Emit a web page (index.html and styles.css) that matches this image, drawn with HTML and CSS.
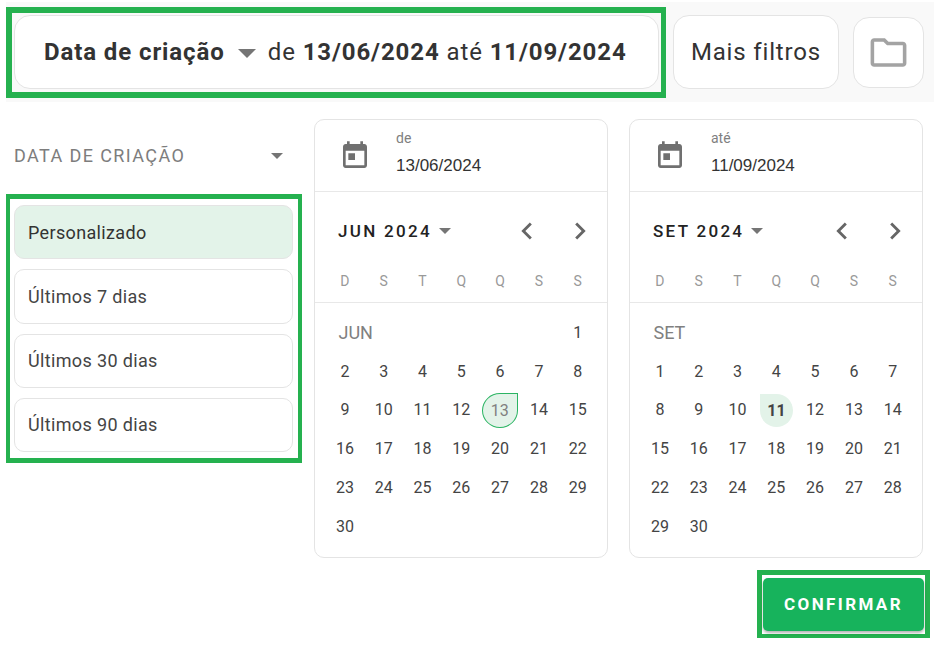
FILE: index.html
```html
<!DOCTYPE html>
<html lang="pt-BR">
<head>
    <meta charset="UTF-8">
    <title>Data de criação</title>
    <link rel="stylesheet" href="styles.css">
</head>
<body>
    <div class="filter-bar">
        <div class="mark mark-summary">
            <div class="summary">
                <strong>Data de criação</strong>
                <span class="caret caret-lg"></span>
                <span class="summary-range">de <strong>13/06/2024</strong> até <strong>11/09/2024</strong></span>
            </div>
        </div>
        <div class="more-filters">Mais filtros</div>
        <div class="folder-button">
            <svg viewBox="0 0 24 24" width="43" height="43"><path d="M9.17 6l2 2H20v10H4V6h5.17M10 4H4c-1.1 0-1.99.9-1.99 2L2 18c0 1.1.9 2 2 2h16c1.1 0 2-.9 2-2V8c0-1.1-.9-2-2-2h-8l-2-2z"/></svg>
        </div>
    </div>

    <div class="content">
        <div class="sidebar">
            <div class="field-select">
                <span>DATA DE CRIAÇÃO</span>
                <span class="caret caret-sm"></span>
            </div>
            <div class="mark mark-presets">
                <div class="preset preset-active">Personalizado</div>
                <div class="preset">Últimos 7 dias</div>
                <div class="preset">Últimos 30 dias</div>
                <div class="preset">Últimos 90 dias</div>
            </div>
        </div>

        <div class="calendar">
            <div class="cal-head">
                <svg class="cal-icon" viewBox="0 0 24 24" width="32" height="32"><path d="M19 3h-1V1h-2v2H8V1H6v2H5c-1.11 0-1.99.9-1.99 2L3 19c0 1.1.89 2 2 2h14c1.1 0 2-.9 2-2V5c0-1.1-.9-2-2-2zm0 16H5V8h14v11zM7 10h5v5H7z"/></svg>
                <div class="cal-text">
                    <div class="cal-label">de</div>
                    <div class="cal-date">13/06/2024</div>
                </div>
            </div>
            <div class="cal-nav">
                <span class="cal-month">JUN 2024</span>
                <span class="caret caret-sm"></span>
                <svg class="chevron chevron-prev" viewBox="0 0 24 24" width="34" height="34"><path d="M15.41 7.41 14 6l-6 6 6 6 1.41-1.41L10.83 12z"/></svg>
                <svg class="chevron" viewBox="0 0 24 24" width="34" height="34"><path d="M8.59 16.59 10 18l6-6-6-6-1.41 1.41L13.17 12z"/></svg>
            </div>
            <div class="weekdays">
                <span>D</span><span>S</span><span>T</span><span>Q</span><span>Q</span><span>S</span><span>S</span>
            </div>
            <div class="days">
                <span class="month-label month-label-short">JUN</span><span>1</span>
                <span>2</span><span>3</span><span>4</span><span>5</span><span>6</span><span>7</span><span>8</span>
                <span>9</span><span>10</span><span>11</span><span>12</span><span class="day-start">13</span><span>14</span><span>15</span>
                <span>16</span><span>17</span><span>18</span><span>19</span><span>20</span><span>21</span><span>22</span>
                <span>23</span><span>24</span><span>25</span><span>26</span><span>27</span><span>28</span><span>29</span>
                <span>30</span>
            </div>
        </div>

        <div class="calendar">
            <div class="cal-head">
                <svg class="cal-icon" viewBox="0 0 24 24" width="32" height="32"><path d="M19 3h-1V1h-2v2H8V1H6v2H5c-1.11 0-1.99.9-1.99 2L3 19c0 1.1.89 2 2 2h14c1.1 0 2-.9 2-2V5c0-1.1-.9-2-2-2zm0 16H5V8h14v11zM7 10h5v5H7z"/></svg>
                <div class="cal-text">
                    <div class="cal-label">até</div>
                    <div class="cal-date">11/09/2024</div>
                </div>
            </div>
            <div class="cal-nav">
                <span class="cal-month">SET 2024</span>
                <span class="caret caret-sm"></span>
                <svg class="chevron chevron-prev" viewBox="0 0 24 24" width="34" height="34"><path d="M15.41 7.41 14 6l-6 6 6 6 1.41-1.41L10.83 12z"/></svg>
                <svg class="chevron" viewBox="0 0 24 24" width="34" height="34"><path d="M8.59 16.59 10 18l6-6-6-6-1.41 1.41L13.17 12z"/></svg>
            </div>
            <div class="weekdays">
                <span>D</span><span>S</span><span>T</span><span>Q</span><span>Q</span><span>S</span><span>S</span>
            </div>
            <div class="days">
                <span class="month-label">SET</span>
                <span>1</span><span>2</span><span>3</span><span>4</span><span>5</span><span>6</span><span>7</span>
                <span>8</span><span>9</span><span>10</span><span class="day-end">11</span><span>12</span><span>13</span><span>14</span>
                <span>15</span><span>16</span><span>17</span><span>18</span><span>19</span><span>20</span><span>21</span>
                <span>22</span><span>23</span><span>24</span><span>25</span><span>26</span><span>27</span><span>28</span>
                <span>29</span><span>30</span>
            </div>
        </div>
    </div>

    <div class="footer">
        <div class="mark mark-confirm">
            <button class="confirm-button">CONFIRMAR</button>
        </div>
    </div>
</body>
</html>
```

FILE: styles.css
```css
* {
    box-sizing: border-box;
}

body {
    margin: 0;
    background: #fff;
    color: #333;
    font-family: Roboto, "Liberation Sans", sans-serif;
}

/* green annotation frames */
.mark {
    border: 6px solid #25b14f;
}

.caret {
    display: inline-block;
    flex: none;
    width: 0;
    height: 0;
    border-style: solid;
    border-color: #757575 transparent transparent transparent;
}

.caret-lg {
    border-width: 9px 9px 0 9px;
    margin: 3px 12px 0 13px;
}

.caret-sm {
    border-width: 6.5px 6.5px 0 6.5px;
}

/* top bar */
.filter-bar {
    display: flex;
    width: 928px;
    height: 100px;
    margin: 2px 0 0 6px;
    background: #f9f9f9;
}

.mark-summary {
    width: 660px;
    height: 91px;
    margin-top: 5px;
    padding: 2px 2px 3px 2px;
    border-right-width: 5px;
}

.summary {
    display: flex;
    align-items: center;
    height: 100%;
    padding-left: 29px;
    background: #fff;
    border: 1px solid #e4e4e4;
    border-radius: 16px;
    font-size: 24px;
    letter-spacing: 0.9px;
}

.summary-range {
    white-space: pre;
}

.summary strong {
    font-weight: 700;
}

.more-filters {
    display: flex;
    align-items: center;
    justify-content: center;
    width: 166px;
    height: 74px;
    margin: 13px 0 0 7px;
    background: #fff;
    border: 1px solid #e4e4e4;
    border-radius: 16px;
    font-size: 24px;
    letter-spacing: 0.85px;
}

.folder-button {
    display: flex;
    align-items: center;
    justify-content: center;
    width: 71px;
    height: 71px;
    margin: 15px 0 0 14px;
    background: #fff;
    border: 1px solid #e4e4e4;
    border-radius: 16px;
}

.folder-button svg {
    fill: #a3a3a3;
}

/* main area */
.content {
    display: flex;
    gap: 21px;
    height: 455px;
    margin: 17px 0 0 6px;
}

.sidebar {
    flex: none;
    width: 296px;
    margin-right: -9px;
}

.field-select {
    display: flex;
    align-items: center;
    justify-content: space-between;
    height: 75px;
    padding: 0 19px 2px 8px;
    color: #7d7d7d;
    font-size: 18px;
    letter-spacing: 1.4px;
}

.mark-presets {
    display: flex;
    flex-direction: column;
    gap: 10px;
    width: 296px;
    height: 269px;
    padding: 6px 5px 6px 4px;
    border-width: 5px 4px;
}

.preset {
    display: flex;
    align-items: center;
    flex: 1;
    padding-left: 13px;
    background: #fff;
    border: 1px solid #e4e4e4;
    border-radius: 10px;
    color: #444;
    font-size: 18px;
    letter-spacing: 0.35px;
}

.preset-active {
    background: #e3f3e9;
    color: #333;
}

/* calendars */
.calendar {
    flex: none;
    width: 294px;
    height: 439px;
    background: #fff;
    border: 1px solid #e4e4e4;
    border-radius: 10px;
}

.cal-head {
    display: flex;
    align-items: center;
    height: 72px;
    padding-left: 24px;
    border-bottom: 1px solid #e8e8e8;
}

.cal-icon {
    fill: #707070;
    margin-right: 25px;
}

.cal-text {
    margin-bottom: 5px;
}

.cal-label {
    color: #808080;
    font-size: 14px;
}

.cal-date {
    margin-top: 10px;
    font-family: "Liberation Sans", sans-serif;
    font-size: 17px;
}

.cal-nav {
    display: flex;
    align-items: center;
    height: 77px;
    padding: 0 10px 0 23px;
}

.cal-month {
    margin-right: 7px;
    color: #222;
    font-size: 17px;
    font-weight: 500;
    letter-spacing: 2.3px;
}

.chevron {
    fill: #666;
}

.chevron-prev {
    margin-left: auto;
    margin-right: 19px;
}

.weekdays,
.days {
    display: grid;
    grid-template-columns: repeat(7, 38.8px);
    padding-left: 10.5px;
    text-align: center;
}

.weekdays {
    height: 34px;
    border-bottom: 1px solid #e8e8e8;
    color: #999;
    font-size: 14px;
    line-height: 24px;
}

.days {
    grid-auto-rows: 38.8px;
    padding-top: 10px;
    color: #444;
    font-size: 16px;
}

.days span {
    display: flex;
    align-items: center;
    justify-content: center;
}

.days .month-label {
    grid-column: span 7;
    justify-content: flex-start;
    padding-left: 13px;
    color: #808080;
    font-size: 18px;
}

.days .month-label-short {
    grid-column: span 6;
}

.days .day-start {
    width: 36px;
    height: 35px;
    margin: 2px 0 0 1px;
    background: #e3f3e9;
    border: 1px solid #2bb463;
    border-radius: 50% 0 50% 50%;
    color: #808080;
}

.days .day-end {
    width: 33px;
    height: 33px;
    margin: 3px 0 0 3px;
    background: #e3f3e9;
    border-radius: 0 50% 50% 50%;
    font-weight: 700;
}

/* footer */
.footer {
    display: flex;
    justify-content: flex-end;
    margin: -4px 10px 0 0;
}

.mark-confirm {
    width: 173px;
    height: 68px;
    padding: 3px 0 0 1px;
    border-width: 5px 5px 4px 5px;
}

.confirm-button {
    display: block;
    width: 161px;
    height: 53px;
    padding: 0 0 2px;
    background: #17b35c;
    border: none;
    border-radius: 5px;
    box-shadow: 0 2px 3px rgba(0, 0, 0, 0.3);
    color: #fff;
    font-family: Roboto, sans-serif;
    font-size: 17px;
    font-weight: 700;
    letter-spacing: 2.4px;
}
```
